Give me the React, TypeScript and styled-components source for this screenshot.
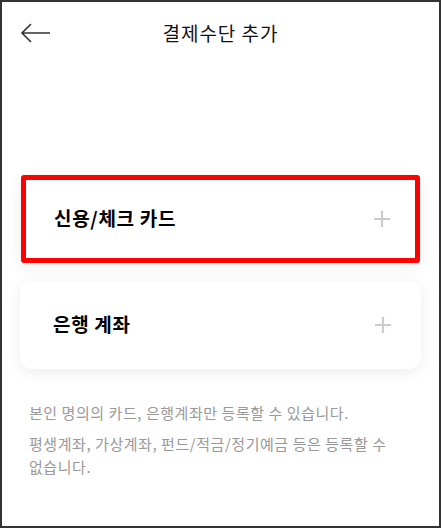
import React, { FC } from 'react';
import styled, { createGlobalStyle } from 'styled-components';

const GlobalStyle = createGlobalStyle`
  html, body {
    margin: 0;
    padding: 0;
    background: #ffffff;
  }
  * {
    box-sizing: border-box;
  }
`;

const Screen = styled.div`
  width: 441px;
  height: 528px;
  border: 2px solid #333333;
  background: #ffffff;
  display: flex;
  flex-direction: column;
  font-family: 'Noto Sans CJK KR', 'Noto Sans', sans-serif;
  overflow: hidden;
`;

const Header = styled.header`
  position: relative;
  height: 60px;
  display: flex;
  align-items: center;
  justify-content: center;
`;

const BackButton = styled.button`
  position: absolute;
  left: 16px;
  top: 50%;
  transform: translateY(-50%);
  margin-top: 1px;
  width: 34px;
  height: 30px;
  padding: 0;
  border: none;
  background: none;
  display: flex;
  align-items: center;
  justify-content: center;
  color: #333333;
`;

const Title = styled.h1`
  margin: 0;
  font-size: 19px;
  font-weight: 400;
  color: #111111;
  letter-spacing: 1px;
`;

const Content = styled.main`
  display: flex;
  flex-direction: column;
  padding: 113px 18px 0 18px;
`;

const MethodList = styled.div`
  display: flex;
  flex-direction: column;
  gap: 18px;
`;

const MethodCard = styled.div<{ $selected?: boolean }>`
  height: 88px;
  display: flex;
  align-items: center;
  justify-content: space-between;
  padding: 0 29px 3px 33px;
  background: #ffffff;
  border-radius: ${(p) => (p.$selected ? '3px' : '12px')};
  box-shadow: 0 3px 16px rgba(0, 0, 0, 0.08);
  outline: ${(p) => (p.$selected ? '5px solid #ff0000' : 'none')};
  outline-offset: -5px;
  margin: ${(p) => (p.$selected ? '0 1px' : '0')};
`;

const MethodLabel = styled.span`
  font-size: 19px;
  font-weight: 700;
  color: #000000;
  letter-spacing: 0.7px;
`;

const PlusIcon = styled.svg`
  width: 18px;
  height: 18px;
  margin-top: 3px;
  color: #cccccc;
`;

const Notice = styled.div`
  display: flex;
  flex-direction: column;
  gap: 8px;
  padding: 32px 9px 0 9px;
`;

const NoticeLine = styled.p`
  margin: 0;
  font-size: 15px;
  line-height: 23px;
  color: #999999;
  letter-spacing: 0.55px;
  word-break: keep-all;
`;

const Plus: FC = () => (
  <PlusIcon viewBox="0 0 18 18" fill="none">
    <path d="M9 1v16M1 9h16" stroke="currentColor" strokeWidth="2.2" />
  </PlusIcon>
);

const methods = [
  { id: 'card', label: '신용/체크 카드', selected: true },
  { id: 'bank', label: '은행 계좌', selected: false },
];

export default function App() {
  return (
    <>
      <GlobalStyle />
      <Screen>
        <Header>
          <BackButton aria-label="뒤로">
            <svg width="32" height="22" viewBox="0 0 32 22" fill="none">
              <path
                d="M31 11H3M12 2L3 11l9 9"
                stroke="currentColor"
                strokeWidth="1.6"
              />
            </svg>
          </BackButton>
          <Title>결제수단 추가</Title>
        </Header>
        <Content>
          <MethodList>
            {methods.map((m) => (
              <MethodCard key={m.id} $selected={m.selected}>
                <MethodLabel>{m.label}</MethodLabel>
                <Plus />
              </MethodCard>
            ))}
          </MethodList>
          <Notice>
            <NoticeLine>본인 명의의 카드, 은행계좌만 등록할 수 있습니다.</NoticeLine>
            <NoticeLine>
              평생계좌, 가상계좌, 펀드/적금/정기예금 등은 등록할 수 없습니다.
            </NoticeLine>
          </Notice>
        </Content>
      </Screen>
    </>
  );
}
